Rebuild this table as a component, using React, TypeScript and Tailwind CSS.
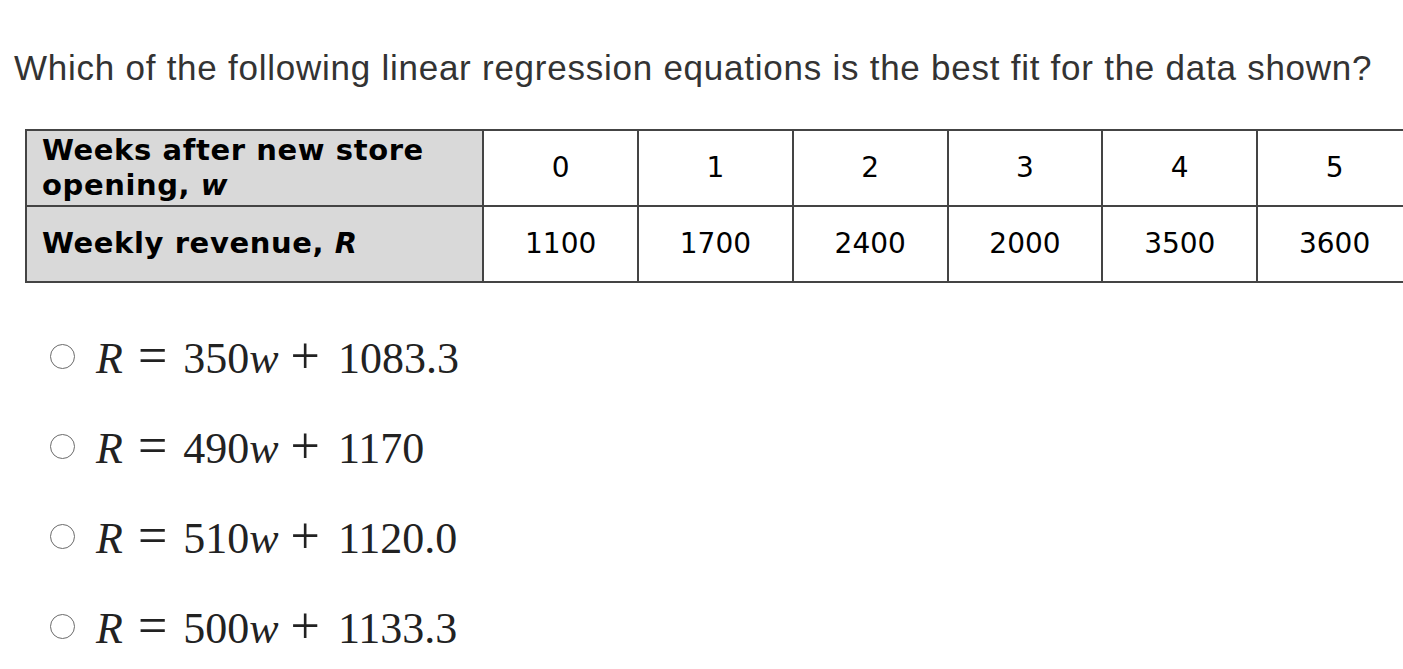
import React from "react"

const weeks = ["0", "1", "2", "3", "4", "5"]
const revenue = ["1100", "1700", "2400", "2000", "3500", "3600"]

const options = [
  { slope: "350", intercept: "1083.3" },
  { slope: "490", intercept: "1170" },
  { slope: "510", intercept: "1120.0" },
  { slope: "500", intercept: "1133.3" },
]

function Equation({ slope, intercept }: { slope: string; intercept: string }) {
  return (
    <span
      className="flex items-baseline text-[44px] leading-none text-[#222]"
      style={{ fontFamily: '"Liberation Serif", "Times New Roman", serif' }}
    >
      <span className="italic">R</span>
      <span className="ml-[15px] text-[52px]">=</span>
      <span className="ml-[16px]">{slope}</span>
      <span className="italic">w</span>
      <span className="ml-[12px] text-[52px]">+</span>
      <span className="ml-[18px]">{intercept}</span>
    </span>
  )
}

export default function App() {
  return (
    <main className="min-h-screen w-[1403px] overflow-hidden bg-white">
      <h1
        className="pl-[14px] pt-[48px] text-[35px] leading-[40px] tracking-[0.75px] font-normal text-[#333]"
        style={{ fontFamily: '"Liberation Sans", Arial, sans-serif' }}
      >
        Which of the following linear regression equations is the best fit for the data shown?
      </h1>

      <div className="ml-[25px] mt-[41px] w-[1388px]">
        <table
          className="table-fixed border-collapse text-[28px] text-black"
          style={{ fontFamily: '"DejaVu Sans", Verdana, sans-serif' }}
        >
          <colgroup>
            <col className="w-[458px]" />
            {weeks.map((w) => (
              <col key={w} className="w-[155px]" />
            ))}
          </colgroup>
          <tbody>
            <tr className="h-[76px]">
              <th className="border-2 border-[#444] bg-[#d9d9d9] px-[15px] text-left align-middle text-[29px] leading-[35px] tracking-[0.6px] font-bold">
                Weeks after new store opening, <i>w</i>
              </th>
              {weeks.map((w) => (
                <td key={w} className="border-2 border-[#444] text-center align-middle">
                  {w}
                </td>
              ))}
            </tr>
            <tr className="h-[76px]">
              <th className="border-2 border-[#444] bg-[#d9d9d9] px-[15px] text-left align-middle text-[29px] tracking-[0.6px] font-bold">
                Weekly revenue, <i>R</i>
              </th>
              {revenue.map((r, i) => (
                <td key={i} className="border-2 border-[#444] text-center align-middle">
                  {r}
                </td>
              ))}
            </tr>
          </tbody>
        </table>
      </div>

      <div className="mt-[53px] flex flex-col gap-[50px] pl-[50px]">
        {options.map((o) => (
          <label key={o.slope} className="flex h-[40px] items-center">
            <span className="h-[25px] w-[25px] shrink-0 rounded-full border-[1.5px] border-[#6b6b6b] bg-white" />
            <span className="ml-[21px]">
              <Equation slope={o.slope} intercept={o.intercept} />
            </span>
          </label>
        ))}
      </div>
    </main>
  )
}
